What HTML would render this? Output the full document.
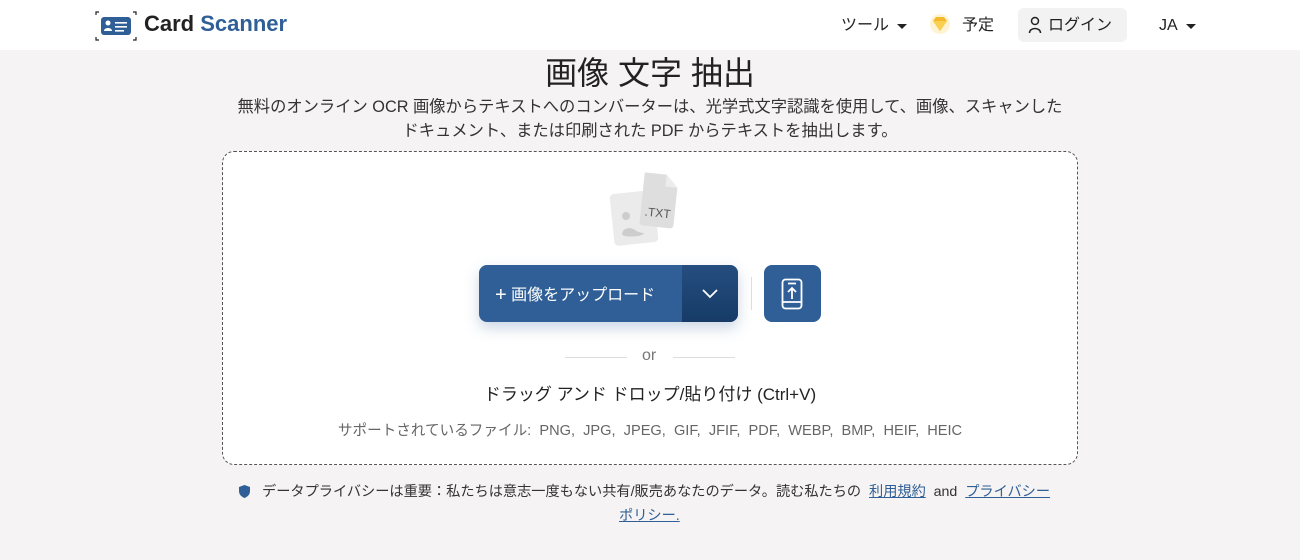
<!DOCTYPE html>
<html><head><meta charset="utf-8"><style>
*{box-sizing:border-box;margin:0;padding:0}
body{width:1300px;height:560px;background:#f5f3f3;font-family:"Liberation Sans","Noto Sans CJK JP",sans-serif;color:#222;position:relative;overflow:hidden}
.hdr{position:absolute;left:0;top:0;width:1300px;height:50px;background:#fff}
.abs{position:absolute;white-space:nowrap}
.nav{position:absolute;top:14px;height:24px;line-height:24px;font-size:16px;display:flex;align-items:center}
.box{position:absolute;left:222px;top:151px;width:856px;height:314px;border:1px dashed #555;border-radius:12px;background:#fff}
.caret{display:inline-block;width:0;height:0;border-left:5px solid transparent;border-right:5px solid transparent;border-top:5px solid #222;margin-left:8px}
</style></head><body>
<div class="hdr">
 <svg class="abs" style="left:95px;top:11px" width="42" height="30" viewBox="0 0 42 30">
  <path d="M1 4V1h3M38 1h3v3M1 26v3h3M38 29h3v-3" stroke="#222" stroke-width="1.2" fill="none"/>
  <rect x="6" y="6" width="30" height="18" rx="3" fill="#2f5f96"/>
  <circle cx="13" cy="12" r="2.5" fill="#fff"/><path d="M9 20c0-4 8-4 8 0z" fill="#fff"/>
  <rect x="20" y="11" width="12" height="1.6" fill="#fff"/><rect x="20" y="15" width="12" height="1.6" fill="#fff"/><rect x="20" y="19" width="9" height="1.6" fill="#fff"/>
 </svg>
 <div class="abs" style="left:144px;top:11px;font-size:22px;font-weight:bold">Card <span style="color:#2f5f96">Scanner</span></div>
 <div class="nav" style="left:841px">ツール<span class="caret"></span></div>
 <svg class="abs" style="left:929px;top:13px" width="22" height="22" viewBox="0 0 22 22"><circle cx="11" cy="11" r="10" fill="#fdf0c0" opacity=".7"/><path d="M4 8l3-4h8l3 4-7 10z" fill="#f5b82a"/><path d="M4 8h14l-7 10z" fill="#f9cf4f"/></svg>
 <div class="nav" style="left:962px">予定</div>
 <div class="abs" style="left:1018px;top:8px;width:109px;height:34px;background:#f2f2f2;border-radius:6px"></div>
 <svg class="abs" style="left:1028px;top:16px" width="14" height="18" viewBox="0 0 14 18"><circle cx="7" cy="5" r="3.5" stroke="#222" stroke-width="1.5" fill="none"/><path d="M1.5 17c0-6 11-6 11 0" stroke="#222" stroke-width="1.5" fill="none"/></svg>
 <div class="nav" style="left:1048px">ログイン</div>
 <div class="nav" style="left:1159px">JA<span class="caret"></span></div>
</div>
<div class="abs" style="left:0;width:1300px;text-align:center;top:48px;font-size:32px">画像 文字 抽出</div>
<div class="abs" style="left:0;width:1300px;text-align:center;top:95px;font-size:16.3px;line-height:24px;color:#333">無料のオンライン OCR 画像からテキストへのコンバーターは、光学式文字認識を使用して、画像、スキャンした<br>ドキュメント、または印刷された PDF からテキストを抽出します。</div>
<div class="box"></div>
<svg class="abs" style="left:606px;top:170px" width="80" height="80" viewBox="0 0 80 80">
 <rect x="6" y="22" width="44" height="52" rx="4" fill="#ebebeb" transform="rotate(-6 28 48)"/>
 <circle cx="20" cy="46" r="4" fill="#cdcdcd"/><path d="M16 64c1-7 9-7 13-4 4 3 9 3 9 3 0 4-22 5-22 1z" fill="#cdcdcd"/>
 <path d="M36 4h22l12 12v38a3 3 0 0 1-3 3H39a3 3 0 0 1-3-3z" fill="#dedede" transform="rotate(6 53 30)"/>
 <path d="M58 4v12h12" fill="#ececec" transform="rotate(6 53 30)"/>
 <text x="40" y="47" font-size="12" fill="#555" font-family="Liberation Sans" transform="rotate(6 53 30)">.TXT</text>
</svg>
<div class="abs" style="left:479px;top:265px;width:259px;height:57px;background:#2f5f96;border-radius:8px;box-shadow:0 6px 14px rgba(47,95,150,.25);overflow:hidden">
 <div class="abs" style="left:16px;top:16px;color:#fff;font-size:16px"><span style="font-size:20px;vertical-align:-1px">+</span> 画像をアップロード</div>
 <div class="abs" style="left:203px;top:0;width:56px;height:57px;background:linear-gradient(#254e80,#163b66)"></div>
 <svg class="abs" style="left:223px;top:24px" width="16" height="10" viewBox="0 0 16 10"><path d="M1 1l7 7 7-7" stroke="#fff" stroke-width="1.8" fill="none"/></svg>
</div>
<div class="abs" style="left:751px;top:277px;width:1px;height:33px;background:#ddd"></div>
<div class="abs" style="left:764px;top:265px;width:57px;height:57px;background:#2f5f96;border-radius:8px"></div>
<svg class="abs" style="left:781px;top:278px" width="22" height="32" viewBox="0 0 22 32"><rect x="1.5" y="1.5" width="19" height="29" rx="3" stroke="#fff" stroke-width="1.8" fill="none"/><path d="M1.5 24h19M7 5.5h8M11 21v-11M7 14l4-4 4 4" stroke="#fff" stroke-width="1.8" fill="none"/></svg>
<div class="abs" style="left:565px;top:357px;width:62px;height:1px;background:#ddd"></div>
<div class="abs" style="left:673px;top:357px;width:62px;height:1px;background:#ddd"></div>
<div class="abs" style="left:642px;top:347px;font-size:16px;color:#777">or</div>
<div class="abs" style="left:0;width:1300px;text-align:center;top:380px;font-size:17px">ドラッグ アンド ドロップ/貼り付け (Ctrl+V)</div>
<div class="abs" style="left:0;width:1300px;text-align:center;top:419px;font-size:14.6px;color:#666">サポートされているファイル:&nbsp; PNG,&nbsp; JPG,&nbsp; JPEG,&nbsp; GIF,&nbsp; JFIF,&nbsp; PDF,&nbsp; WEBP,&nbsp; BMP,&nbsp; HEIF,&nbsp; HEIC</div>
<svg class="abs" style="left:239px;top:485px" width="11" height="13" viewBox="0 0 11 13"><path d="M5.5 0L11 2v4c0 4-3 6-5.5 7C3 12 0 10 0 6V2z" fill="#2f5f96"/></svg>
<div class="abs" style="left:262px;top:481px;font-size:14.2px;color:#333">データプライバシーは重要：私たちは意志一度もない共有/販売あなたのデータ。読む私たちの&nbsp; <u style="color:#2f5f96">利用規約</u>&nbsp; and&nbsp; <u style="color:#2f5f96">プライバシー</u></div>
<div class="abs" style="left:619px;top:505px;font-size:14.2px;color:#2f5f96"><u>ポリシー.</u></div>
</body></html>
